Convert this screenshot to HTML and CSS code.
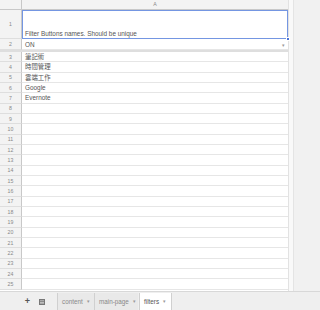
FILE: index.html
```html
<!DOCTYPE html>
<html>
<head>
<meta charset="utf-8">
<link rel="stylesheet" href="styles.css">
</head>
<body>
<div class="app">
  <div class="sheet">
    <div class="grid">
      <div class="row head"><div class="rh"></div><div class="cell colhead">A</div></div>
      <div class="row r1"><div class="rh">1</div><div class="cell sel">Filter Buttons names. Should be unique<span class="handle"></span></div></div>
      <div class="row r2"><div class="rh">2</div><div class="cell">ON<span class="dd">&#9662;</span></div></div>
      <div class="frozen"></div>
      <div class="row"><div class="rh">3</div><div class="cell">筆記術</div></div>
      <div class="row"><div class="rh">4</div><div class="cell">時間管理</div></div>
      <div class="row"><div class="rh">5</div><div class="cell">雲端工作</div></div>
      <div class="row"><div class="rh">6</div><div class="cell">Google</div></div>
      <div class="row"><div class="rh">7</div><div class="cell">Evernote</div></div>
      <div class="row"><div class="rh">8</div><div class="cell"></div></div>
      <div class="row"><div class="rh">9</div><div class="cell"></div></div>
      <div class="row"><div class="rh">10</div><div class="cell"></div></div>
      <div class="row"><div class="rh">11</div><div class="cell"></div></div>
      <div class="row"><div class="rh">12</div><div class="cell"></div></div>
      <div class="row"><div class="rh">13</div><div class="cell"></div></div>
      <div class="row"><div class="rh">14</div><div class="cell"></div></div>
      <div class="row"><div class="rh">15</div><div class="cell"></div></div>
      <div class="row"><div class="rh">16</div><div class="cell"></div></div>
      <div class="row"><div class="rh">17</div><div class="cell"></div></div>
      <div class="row"><div class="rh">18</div><div class="cell"></div></div>
      <div class="row"><div class="rh">19</div><div class="cell"></div></div>
      <div class="row"><div class="rh">20</div><div class="cell"></div></div>
      <div class="row"><div class="rh">21</div><div class="cell"></div></div>
      <div class="row"><div class="rh">22</div><div class="cell"></div></div>
      <div class="row"><div class="rh">23</div><div class="cell"></div></div>
      <div class="row"><div class="rh">24</div><div class="cell"></div></div>
      <div class="row"><div class="rh">25</div><div class="cell"></div></div>
    </div>
    <div class="vscroll"><div class="track"></div></div>
  </div>
  <div class="tabbar">
    <div class="tools">
      <span class="plus">+</span>
      <svg class="list" width="6" height="6" viewBox="0 0 6 6"><rect x="0" y="0" width="6" height="6" fill="#777"/><rect x="1" y="1.5" width="4" height="0.7" fill="#ddd"/><rect x="1" y="3" width="4" height="0.7" fill="#ddd"/><rect x="1" y="4.5" width="4" height="0.5" fill="#ddd"/></svg>
    </div>
    <div class="tab">content<span class="arr">&#9662;</span></div>
    <div class="tab wide">main-page<span class="arr">&#9662;</span></div>
    <div class="tab active">filters<span class="arr">&#9662;</span></div>
  </div>
</div>
</body>
</html>
```
FILE: styles.css
```css
html, body { margin: 0; padding: 0; }
body {
  width: 320px;
  height: 310px;
  overflow: hidden;
  background: #fff;
  font-family: "Liberation Sans", Arial, "Noto Sans CJK TC", sans-serif;
}
.app { display: flex; flex-direction: column; width: 320px; height: 310px; }
.sheet { display: flex; height: 291px; }
.grid { width: 288px; display: flex; flex-direction: column; }
.row { display: flex; height: 10.33px; box-sizing: border-box; }
.rh {
  width: 22px;
  flex: none;
  box-sizing: border-box;
  background: #f3f3f3;
  border-right: 1px solid #c8c8c8;
  border-bottom: 1px solid #dedede;
  color: #888;
  font-size: 5.2px;
  display: flex;
  align-items: center;
  justify-content: center;
}
.cell {
  flex: 1;
  box-sizing: border-box;
  border-bottom: 1px solid #e6e6e6;
  font-size: 6.4px;
  color: #555;
  padding-left: 3px;
  display: flex;
  align-items: flex-end;
  padding-bottom: 1px;
  position: relative;
  line-height: 1;
}
.row.head { height: 10px; }
.row.head .rh { border-bottom: 1px solid #c8c8c8; }
.colhead {
  background: #f3f3f3;
  border-bottom: 1px solid #c8c8c8;
  justify-content: center;
  align-items: center;
  padding: 0;
  color: #888;
  font-size: 5.2px;
}
.row.r1 { height: 29px; }
.row.r2 { height: 11px; }
.sel { border: 1px solid #7496e2; padding-left: 2px; }
.handle {
  position: absolute;
  right: -3px;
  bottom: -3px;
  width: 4px;
  height: 4px;
  background: #4a72d6;
  border: 0.5px solid #fff;
  box-sizing: border-box;
}
.dd {
  position: absolute;
  right: 3px;
  bottom: 1px;
  font-size: 5px;
  color: #999;
}
.frozen { height: 2px; background: #dedede; flex: none; }
.vscroll {
  flex: 1;
  background: #f1f1f1;
  border-left: 1px solid #e2e2e2;
  display: flex;
}
.track { width: 4px; background: #f9f9f9; border-right: 1px solid #e4e4e4; }
.tabbar {
  flex: 1;
  background: #efefef;
  border-top: 1px solid #d8d8d8;
  display: flex;
  align-items: stretch;
  padding-top: 1px;
}
.tools { width: 57px; display: flex; align-items: center; justify-content: flex-end; gap: 9px; padding-right: 12px; box-sizing: border-box; }
.plus { color: #555; font-size: 9px; line-height: 1; font-weight: bold; }
.tab {
  width: 37px;
  box-sizing: border-box;
  border-left: 1px solid #d0d0d0;
  background: #e9e9e9;
  color: #888;
  font-size: 6.3px;
  display: flex;
  align-items: center;
  padding-left: 4px;
  gap: 4px;
}
.tab.wide { width: 44px; }
.tab.active {
  width: 33px;
  background: #fff;
  color: #555;
  border-right: 1px solid #d0d0d0;
  border-left: 1px solid #d0d0d0;
  margin-left: 1px;
}
.arr { font-size: 4.5px; color: #999; }
```
